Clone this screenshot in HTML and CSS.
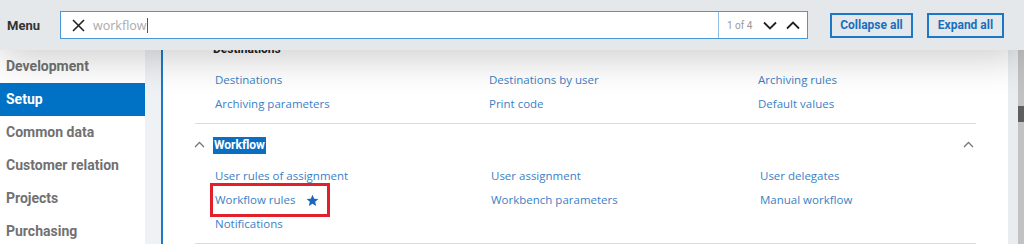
FILE: index.html
```html
<!DOCTYPE html>
<html lang="en">

<head>
    <meta charset="UTF-8">
    <meta name="viewport" content="width=device-width, initial-scale=1.0">
    <title>Menu</title>
    <link rel="stylesheet" href="styles.css">
</head>

<body>

    <header class="topbar">
        <span class="menu-title">Menu</span>
        <div class="search">
            <svg class="clear" width="13" height="13" viewBox="0 0 13 13">
                <path d="M1 1L12 12M12 1L1 12" stroke="#222" stroke-width="1.6" fill="none"/>
            </svg>
            <span class="query">workflow<span class="caret"></span></span>
            <div class="search-nav">
                <span class="count">1 of 4</span>
                <svg width="14" height="9" viewBox="0 0 14 9">
                    <path d="M1 1.5L7 7.5L13 1.5" stroke="#222" stroke-width="1.8" fill="none"/>
                </svg>
                <svg width="14" height="9" viewBox="0 0 14 9">
                    <path d="M1 7.5L7 1.5L13 7.5" stroke="#222" stroke-width="1.8" fill="none"/>
                </svg>
            </div>
        </div>
        <button class="btn collapse">Collapse all</button>
        <button class="btn expand">Expand all</button>
    </header>

    <div class="area">
        <nav class="side">
            <a class="side-item">Development</a>
            <a class="side-item active">Setup</a>
            <a class="side-item">Common data</a>
            <a class="side-item">Customer relation</a>
            <a class="side-item">Projects</a>
            <a class="side-item">Purchasing</a>
        </nav>
        <div class="gutter"></div>

        <main class="content">
            <section class="group">
                <div class="group-head">
                    <span class="group-title">Destinations</span>
                </div>
                <div class="links">
                    <a>Destinations</a>
                    <a>Destinations by user</a>
                    <a>Archiving rules</a>
                    <a>Archiving parameters</a>
                    <a>Print code</a>
                    <a>Default values</a>
                </div>
            </section>

            <section class="group">
                <div class="group-head">
                    <svg class="chev" width="11" height="7" viewBox="0 0 11 7">
                        <path d="M1 6L5.5 1.5L10 6" stroke="#777" stroke-width="1.3" fill="none"/>
                    </svg>
                    <span class="group-title found">Workflow</span>
                    <svg class="chev-end" width="11" height="7" viewBox="0 0 11 7">
                        <path d="M1 6L5.5 1.5L10 6" stroke="#777" stroke-width="1.3" fill="none"/>
                    </svg>
                </div>
                <div class="links wf">
                    <a>User rules of assignment</a>
                    <a>User assignment</a>
                    <a>User delegates</a>
                    <a class="marked">Workflow rules
                        <svg width="13" height="13" viewBox="0 0 24 24">
                            <path d="M12 1.5l3.2 7.1 7.6.7-5.8 5.1 1.8 7.6L12 18l-6.8 4 1.8-7.6L1.2 9.3l7.6-.7z" fill="#1668bd"/>
                        </svg>
                    </a>
                    <a>Workbench parameters</a>
                    <a>Manual workflow</a>
                    <a>Notifications</a>
                </div>
            </section>
        </main>

        <div class="scroll">
            <div class="scroll-track"><div class="thumb"></div></div>
        </div>
    </div>

</body>

</html>
```

FILE: styles.css
```css
*{
    margin: 0;
    padding: 0;
    box-sizing: border-box;
}
body{
    width: 1024px;
    height: 244px;
    overflow: hidden;
    background: #fff;
    font-family: Roboto, "Liberation Sans", sans-serif;
    display: flex;
    flex-direction: column;
}

/* top bar */
.topbar{
    height: 50px;
    flex-shrink: 0;
    background: #e4e8eb;
    display: flex;
    align-items: center;
    padding: 0 0 0 7px;
    position: relative;
    z-index: 2;
    box-shadow: 0 6px 40px rgba(0, 0, 0, 0.22);
}
.menu-title{
    font-weight: 700;
    font-size: 13px;
    color: #333;
    width: 53px;
    flex-shrink: 0;
}
.search{
    width: 748px;
    flex-shrink: 0;
    height: 28px;
    background: #fff;
    border: 1px solid #4b97d6;
    display: flex;
    align-items: center;
    padding-left: 11px;
}
.clear{
    margin-right: 8px;
}
.query{
    flex: 1;
    font-family: "Open Sans", sans-serif;
    font-size: 12.5px;
    color: #aaa;
    display: flex;
    align-items: center;
}
.caret{
    width: 1px;
    height: 15px;
    background: #555;
    margin-left: 1px;
}
.search-nav{
    height: 100%;
    width: 89px;
    border-left: 1px solid #8fbde6;
    display: flex;
    align-items: center;
    padding-left: 8px;
    gap: 9px;
}
.count{
    font-size: 10px;
    color: #999;
    margin-right: 2px;
}
.btn{
    height: 25px;
    flex-shrink: 0;
    white-space: nowrap;
    border: 2px solid #1b78c7;
    background: transparent;
    color: #1a6fbe;
    font-family: Roboto, sans-serif;
    font-weight: 700;
    font-size: 12px;
    margin-left: 22px;
}
.btn.collapse{
    width: 83px;
}
.btn.expand{
    width: 77px;
    margin-left: 14px;
}

/* below bar */
.area{
    flex: 1;
    display: flex;
    min-height: 0;
}
.side{
    width: 145px;
    flex-shrink: 0;
    display: flex;
    flex-direction: column;
}
.side-item{
    height: 33px;
    line-height: 33px;
    padding-left: 6px;
    font-weight: 700;
    font-size: 14px;
    color: #717171;
}
.side-item.active{
    background: #0072c6;
    color: #fff;
}
.gutter{
    width: 18px;
    flex-shrink: 0;
    background: #eef2f4;
    border-right: 2px solid #1c79c9;
}

.content{
    flex: 1;
    margin-top: -22px;
    padding: 0 32px;
    font-family: "Open Sans", sans-serif;
}
.group{
    border-bottom: 1px solid #dcdcdc;
    padding: 9px 0 7px;
}
.group-head{
    height: 24px;
    display: flex;
    align-items: center;
    padding-left: 18px;
    margin-bottom: 7px;
    position: relative;
}
.group-title{
    font-family: Roboto, sans-serif;
    font-weight: 700;
    font-size: 12px;
    color: #222;
}
.group-title.found{
    background: #0a6fc3;
    color: #fff;
    padding: 0 1px;
    line-height: 17px;
}
.chev{
    position: absolute;
    left: -1px;
    top: 8px;
}
.chev-end{
    position: absolute;
    right: 2px;
    top: 8px;
}
.links{
    display: grid;
    grid-template-columns: 274px 269px auto;
    padding-left: 20px;
}
.links.wf{
    grid-template-columns: 276px 269px auto;
}
.links a{
    height: 24px;
    line-height: 24px;
    font-size: 11.5px;
    color: #3a7fc6;
    justify-self: start;
}
.links a.marked{
    display: flex;
    align-items: center;
    gap: 11px;
    outline: 3px solid #e1202c;
    outline-offset: 2px;
    padding-right: 6px;
}

/* scrollbar */
.scroll{
    width: 16px;
    flex-shrink: 0;
    background: #e9edef;
    display: flex;
    justify-content: flex-end;
}
.scroll-track{
    width: 6px;
    background: #c2c2c2;
    position: relative;
}
.thumb{
    position: absolute;
    left: 0;
    right: 0;
    top: 56px;
    height: 16px;
    background: #5e5e5e;
}
```
